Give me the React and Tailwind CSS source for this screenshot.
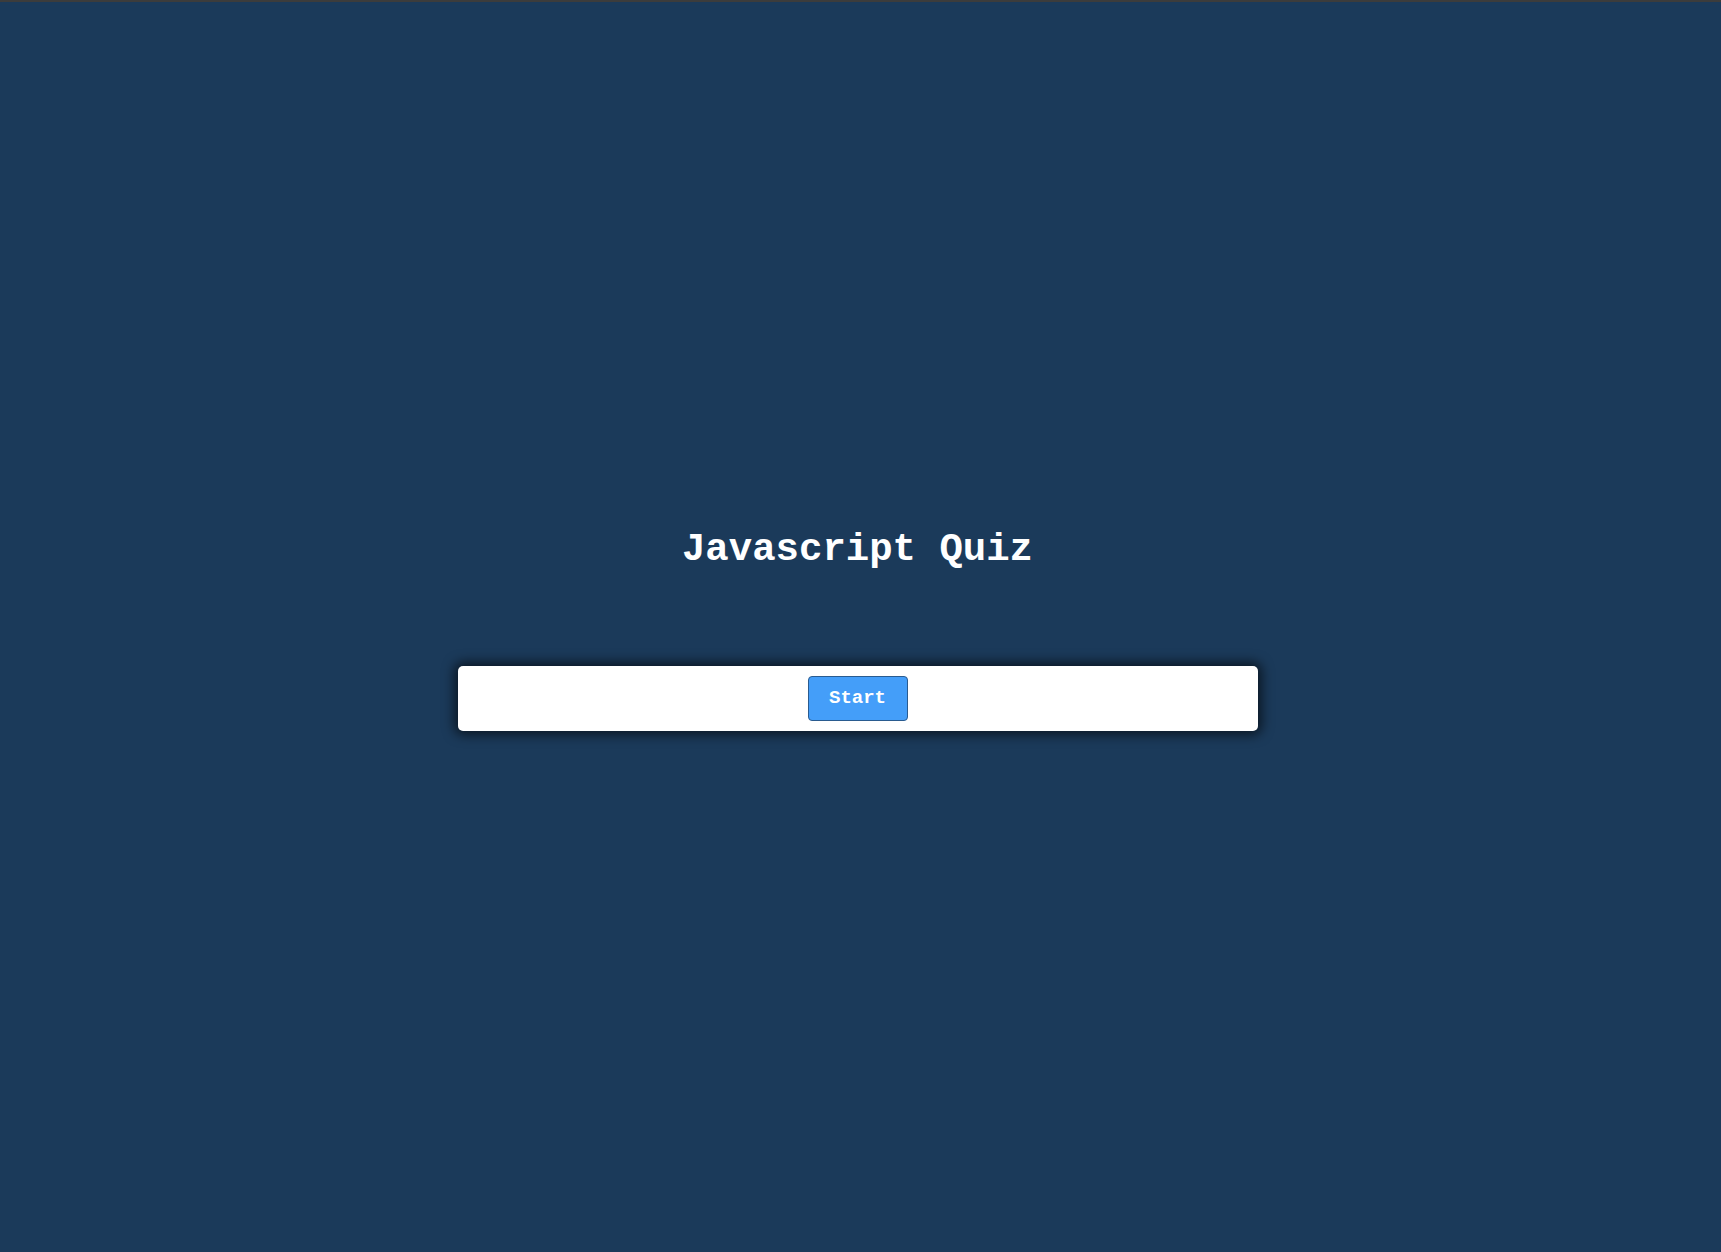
import React from 'react';

const mono = { fontFamily: '"Liberation Mono", "Courier New", monospace' };

export default function App() {
  return (
    <div className="h-[1252px] w-full bg-[#1b3a5a] border-t-2 border-[#3c3c3c] pr-[6px] flex flex-col items-center justify-center" style={mono}>
      <h1 className="text-[39px] leading-[52px] font-bold text-white">Javascript Quiz</h1>
      <div className="mt-[90px] w-[800px] h-[65px] bg-white rounded-[5px] shadow-[0_0_12px_4px_rgba(0,0,0,0.6)] flex justify-center pt-[10px]">
        <button className="w-[100px] h-[45px] bg-[#449ef9] border border-[#2a5b8f] rounded-[4px] text-white font-bold text-[19px]">
          Start
        </button>
      </div>
    </div>
  );
}
